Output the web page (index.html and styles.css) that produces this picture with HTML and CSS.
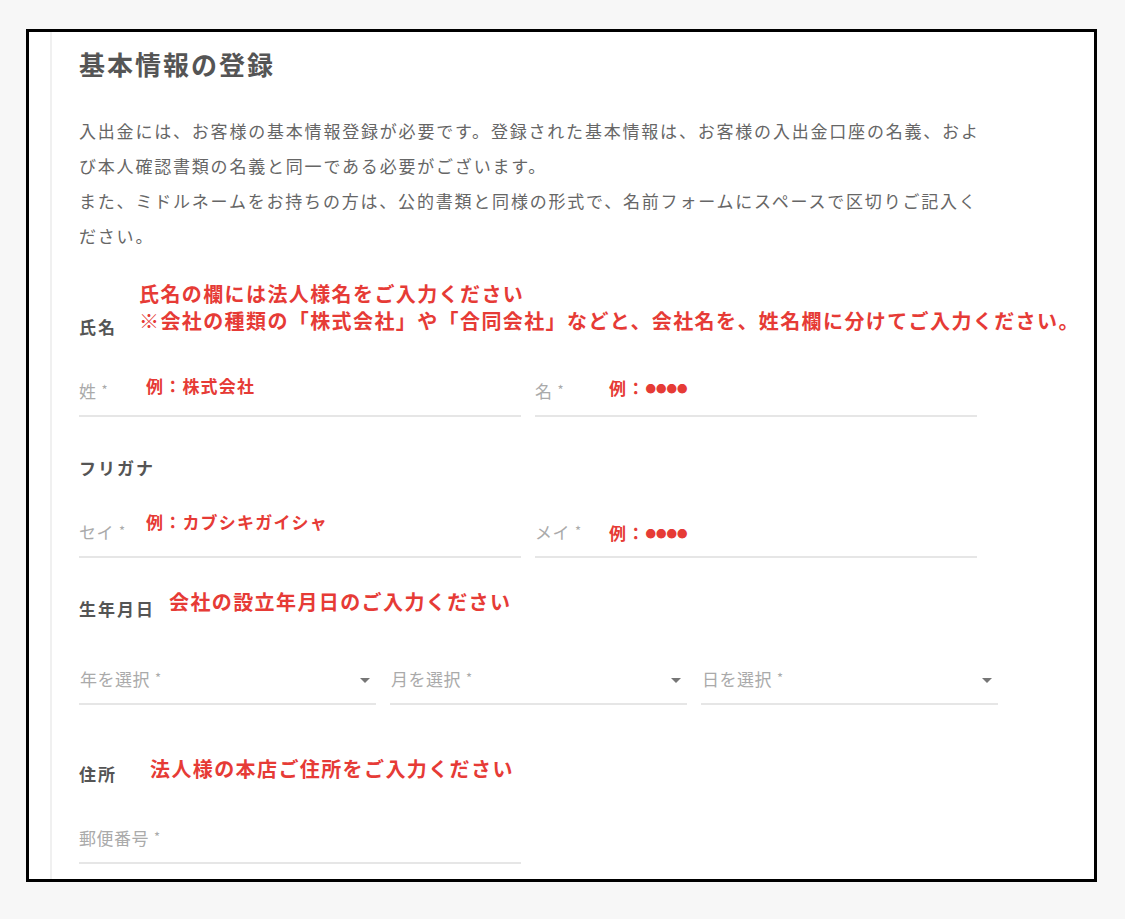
FILE: index.html
```html
<!DOCTYPE html>
<html lang="ja">
<head>
<meta charset="utf-8">
<title>基本情報の登録</title>
<link rel="stylesheet" href="styles.css">
</head>
<body>
<div class="frame">
  <div class="panel">
    <h1 class="title">基本情報の登録</h1>
    <p class="intro">入出金には、お客様の基本情報登録が必要です。登録された基本情報は、お客様の入出金口座の名義、および本人確認書類の名義と同一である必要がございます。<br>また、ミドルネームをお持ちの方は、公的書類と同様の形式で、名前フォームにスペースで区切りご記入ください。</p>

    <section class="section section-first">
      <div class="section-head">
        <span class="label">氏名</span>
        <div class="note note-name">氏名の欄には法人様名をご入力ください<br>※会社の種類の「株式会社」や「合同会社」などと、会社名を、姓名欄に分けてご入力ください。</div>
      </div>
      <div class="fields">
        <div class="field">
          <span class="ph">姓<span class="req">*</span></span>
          <span class="example ex-sei">例：株式会社</span>
        </div>
        <div class="field">
          <span class="ph">名<span class="req">*</span></span>
          <span class="example ex-mei">例：<span class="dots">●●●●</span></span>
        </div>
      </div>
    </section>

    <section class="section">
      <div class="section-head">
        <span class="label">フリガナ</span>
      </div>
      <div class="fields">
        <div class="field">
          <span class="ph">セイ<span class="req">*</span></span>
          <span class="example ex-kana-sei">例：カブシキガイシャ</span>
        </div>
        <div class="field">
          <span class="ph">メイ<span class="req">*</span></span>
          <span class="example ex-kana-mei">例：<span class="dots">●●●●</span></span>
        </div>
      </div>
    </section>

    <section class="section section-birth">
      <div class="section-head">
        <span class="label">生年月日</span>
        <div class="note note-birth">会社の設立年月日のご入力ください</div>
      </div>
      <div class="selects">
        <div class="select">
          <span class="ph">年を選択<span class="req">*</span></span>
          <span class="arrow"></span>
        </div>
        <div class="select">
          <span class="ph">月を選択<span class="req">*</span></span>
          <span class="arrow"></span>
        </div>
        <div class="select">
          <span class="ph">日を選択<span class="req">*</span></span>
          <span class="arrow"></span>
        </div>
      </div>
    </section>

    <section class="section section-after-select">
      <div class="section-head">
        <span class="label">住所</span>
        <div class="note note-addr">法人様の本店ご住所をご入力ください</div>
      </div>
      <div class="fields fields-single">
        <div class="field">
          <span class="ph">郵便番号<span class="req">*</span></span>
        </div>
      </div>
    </section>
  </div>
</div>
</body>
</html>
```

FILE: styles.css
```css
* {
  box-sizing: border-box;
}

html, body {
  margin: 0;
  padding: 0;
}

body {
  background: #f7f7f7;
  font-family: "Noto Sans CJK JP", "Noto Sans", sans-serif;
  padding: 29px 0 0 26px;
}

.frame {
  width: 1071px;
  height: 853px;
  border: 3px solid #000;
  background: #fff;
  overflow: hidden;
  display: flex;
  flex-direction: column;
}

.panel {
  flex: 1;
  margin-left: 21px;
  border-left: 2px solid #f0f0f0;
  padding: 15px 0 0 27px;
}

.title {
  margin: 0;
  font-size: 26px;
  line-height: 34px;
  font-weight: 700;
  letter-spacing: 2px;
  color: #555;
}

.intro {
  margin: 32px 0 0;
  width: 912px;
  font-size: 17px;
  line-height: 35px;
  letter-spacing: 1.8px;
  color: #666;
}

.section {
  margin-top: 41px;
}

.section-first {
  margin-top: 64px;
}

.section-birth {
  margin-top: 41px;
}

.section-after-select {
  margin-top: 59px;
}

.section-head {
  position: relative;
  line-height: 20px;
}

.label {
  font-size: 17px;
  font-weight: 700;
  letter-spacing: 2px;
  color: #555;
}

.note {
  position: absolute;
  bottom: 3px;
  white-space: nowrap;
  font-size: 20px;
  line-height: 27px;
  font-weight: 700;
  letter-spacing: 1.4px;
  color: #e63b36;
}

.note-name {
  left: 60px;
}

.note-birth {
  left: 90px;
  bottom: 4px;
}

.note-addr {
  left: 71px;
  bottom: 2px;
}

.fields {
  margin-top: 44px;
  display: grid;
  grid-template-columns: 442px 442px;
  column-gap: 14px;
}

.fields-single {
  grid-template-columns: 442px;
}

.field,
.select {
  position: relative;
  display: flex;
  align-items: center;
  line-height: 20px;
  padding-bottom: 12px;
  border-bottom: 2px solid #e6e6e6;
}

.ph {
  font-size: 17px;
  letter-spacing: 0.5px;
  color: #aaa;
}

.req {
  font-size: 13px;
  margin-left: 5px;
  position: relative;
  top: -3px;
}

.example {
  position: absolute;
  top: -5px;
  left: 67px;
  font-size: 17px;
  line-height: 20px;
  font-weight: 700;
  letter-spacing: 1.2px;
  color: #e63b36;
  white-space: nowrap;
}

.ex-mei {
  left: 74px;
  top: -3px;
}

.ex-kana-sei {
  top: -10px;
}

.ex-kana-mei {
  left: 74px;
  top: 1px;
}

.dots {
  font-size: 10.5px;
  letter-spacing: 0;
  vertical-align: 2px;
}

.selects {
  margin-top: 50px;
  display: grid;
  grid-template-columns: 297px 297px 297px;
  column-gap: 14px;
}

.select .ph {
  margin-left: 1px;
}

.arrow {
  margin-left: auto;
  margin-right: 6px;
  width: 0;
  height: 0;
  border-left: 5px solid transparent;
  border-right: 5px solid transparent;
  border-top: 5px solid #767676;
}
```
